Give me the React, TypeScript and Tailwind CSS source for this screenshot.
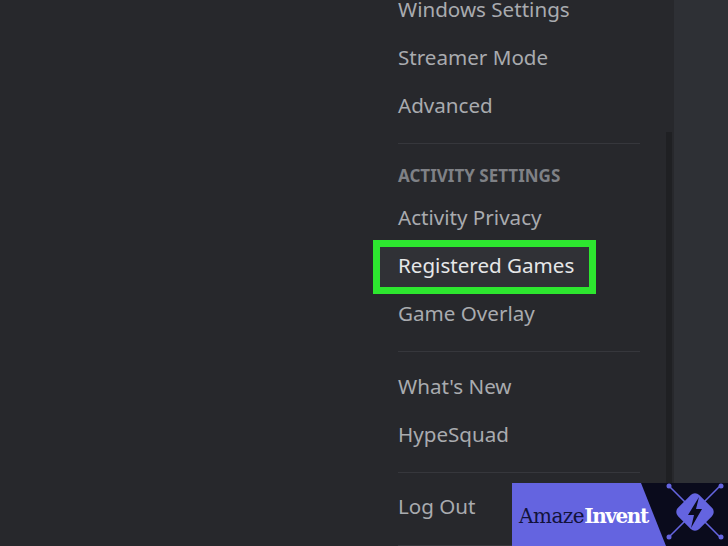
function Row({ label, active }: { label: string; active?: boolean }) {
  return (
    <div className={`relative h-12 flex items-center text-[20.6px] leading-none whitespace-nowrap ${active ? "text-[#e6e7e8]" : "text-[#a9abaf]"}`}>
      {active && (
        <div className="absolute -left-[25px] top-[-1px] w-[223px] h-[54px] border-[7px] border-[#2de62f] bg-[#303136]"></div>
      )}
      <span className="relative">{label}</span>
    </div>
  );
}

function Divider({ className }: { className: string }) {
  return <div className={`h-px w-[242px] bg-[#36373c] ${className}`}></div>;
}

export default function App() {
  return (
    <div className="relative w-[728px] h-[546px] overflow-hidden flex bg-[#2e3035] font-['Noto_Sans',sans-serif]">
      {/* Settings sidebar */}
      <div className="relative w-[674px] h-full bg-[#27282c] pl-[398px]">
        <div className="-mt-[15px]">
          <Row label="Windows Settings" />
          <Row label="Streamer Mode" />
          <Row label="Advanced" />
        </div>
        <Divider className="mt-[14px]" />
        <div className="mt-[22px] h-5 flex items-center text-[17px] font-bold text-[#7f8186] whitespace-nowrap">
          ACTIVITY SETTINGS
        </div>
        <div className="mt-[7px]">
          <Row label="Activity Privacy" />
          <Row label="Registered Games" active />
          <Row label="Game Overlay" />
        </div>
        <Divider className="mt-[14px]" />
        <div className="mt-[10px]">
          <Row label="What's New" />
          <Row label="HypeSquad" />
        </div>
        <Divider className="mt-[14px]" />
        <div className="mt-[9px]">
          <Row label="Log Out" />
        </div>
        <Divider className="mt-[15px]" />

        {/* Scrollbar */}
        <div className="absolute right-[2px] top-[132px] bottom-0 w-[6px] bg-[#1f2023]"></div>
      </div>

      {/* Watermark */}
      <div className="absolute left-[512px] top-[483px] w-[216px] h-[63px] bg-[#0a0b1c] overflow-hidden">
        <svg className="absolute inset-0" width="216" height="63" viewBox="0 0 216 63">
          <polygon points="0,0 129,0 154,63 0,63" fill="#6464e0" />
          <g stroke="#6464e0" strokeWidth="1.5">
            <line x1="157" y1="3" x2="208" y2="54" />
            <line x1="208" y1="3" x2="157" y2="54" />
          </g>
          <circle cx="157" cy="3" r="2.5" fill="#6464e0" />
          <circle cx="209" cy="3" r="2.5" fill="#6464e0" />
          <circle cx="157" cy="54" r="2.5" fill="#6464e0" />
          <circle cx="209" cy="54" r="2.5" fill="#6464e0" />
          <rect x="168" y="14" width="30" height="30" rx="6" fill="#6464e0" transform="rotate(45 183 29)" />
          <polygon points="187,14 176,32 182,32 179,45 190,26 184,26" fill="#0a0b1c" />
        </svg>
        <div className="absolute left-[7px] top-[20px] text-[20px] leading-[26px] font-['DejaVu_Serif',serif] whitespace-nowrap">
          <span className="text-[#12123a] tracking-[-0.5px]">Amaze</span>
          <span className="text-white font-bold tracking-[-1.4px]">Invent</span>
        </div>
      </div>
    </div>
  );
}
